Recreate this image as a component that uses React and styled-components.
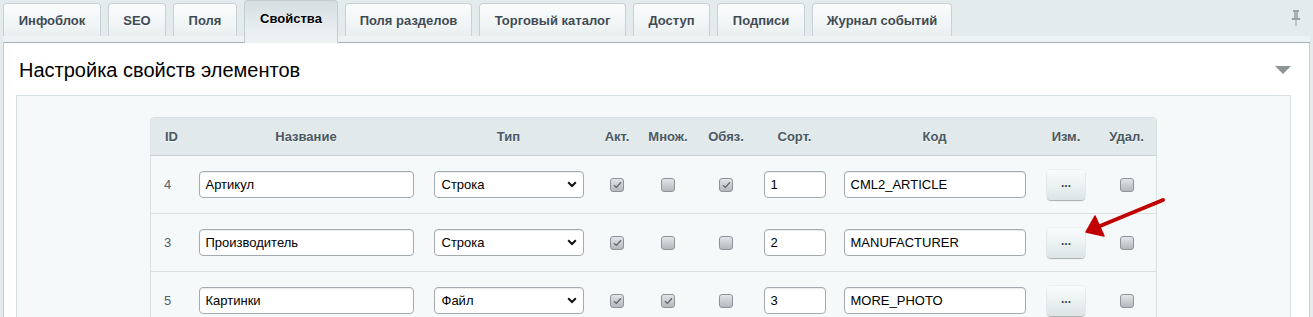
import React from 'react';
import styled, { createGlobalStyle } from 'styled-components';

const GlobalStyle = createGlobalStyle`
  html, body {
    margin: 0;
    padding: 0;
    background: #e4ebed;
    font-family: "Liberation Sans", Arial, sans-serif;
  }
`;

const Page = styled.div`
  position: relative;
  width: 1313px;
  height: 317px;
  overflow: hidden;
  background: #e4ebed;
`;

const TabBar = styled.div`
  display: flex;
  align-items: flex-end;
  gap: 7px;
  height: 36px;
  padding: 0 0 0 3px;
  position: relative;
`;

const Tab = styled.div`
  display: flex;
  align-items: center;
  justify-content: center;
  box-sizing: border-box;
  height: ${(p) => (p.$active ? '43px' : '33px')};
  margin-bottom: ${(p) => (p.$active ? '-7px' : '0')};
  padding: ${(p) => (p.$active ? '0 16px 7px' : '0 16px')};
  width: ${(p) => p.$w}px;
  border: 1px solid ${(p) => (p.$active ? '#c3ccd0' : '#c7d0d4')};
  border-bottom: none;
  border-radius: 4px 4px 0 0;
  background: ${(p) =>
    p.$active
      ? 'linear-gradient(#d6dee1, #e9eef0 70%, #edf2f3)'
      : 'linear-gradient(#fbfcfc, #f1f5f6 60%, #e9eef0)'};
  font-size: 13px;
  font-weight: bold;
  color: ${(p) => (p.$active ? '#000' : '#3f4b54')};
  text-shadow: 0 1px 0 rgba(255, 255, 255, 0.8);
  white-space: nowrap;
  z-index: ${(p) => (p.$active ? 2 : 1)};
`;

const Pin = styled.div`
  position: absolute;
  right: 12px;
  top: 9px;
  width: 10px;
  height: 17px;
`;

const Strip = styled.div`
  height: 6px;
  margin: 0 3px;
  background: #edf2f3;
  border-bottom: 1px solid #a6b0b4;
`;

const Panel = styled.div`
  margin: 0 3px;
  background: #fff;
  border-left: 1px solid #c5ced2;
  border-right: 1px solid #c5ced2;
  padding: 0 17px 0 12px;
  height: 280px;
`;

const TitleRow = styled.div`
  display: flex;
  align-items: center;
  justify-content: space-between;
  height: 52px;
  padding: 0 0 0 3px;
`;

const Title = styled.h2`
  margin: 0;
  font-size: 20px;
  font-weight: normal;
  color: #000;
  padding-top: 2px;
`;

const Toggle = styled.div`
  width: 0;
  height: 0;
  margin-right: 1px;
  border-left: 8px solid transparent;
  border-right: 8px solid transparent;
  border-top: 8px solid #8e9599;
  margin-top: 2px;
`;

const InnerBox = styled.div`
  box-sizing: border-box;
  width: 1275px;
  height: 240px;
  background: #f5f9f9;
  border: 1px solid #d6dfe2;
  padding-top: 21px;
  display: flex;
  justify-content: center;
`;

const COLS = '39px 234px 171px 46px 56px 60px 77px 203px 60px 61px';

const Table = styled.div`
  width: 1007px;
  align-self: flex-start;
  box-sizing: border-box;
  border: 1px solid #d8e0e3;
  border-radius: 4px 4px 0 0;
  background: #f6f9f9;
`;

const HeadRow = styled.div`
  display: grid;
  grid-template-columns: ${COLS};
  height: 37px;
  margin-left: -1px;
  background: #e1e9eb;
  border-bottom: 1px solid #c8d2d6;
  border-radius: 4px 4px 0 0;
`;

const HeadCell = styled.div`
  display: flex;
  align-items: center;
  justify-content: ${(p) => (p.$left ? 'flex-start' : 'center')};
  padding-left: ${(p) => (p.$left ? '15px' : '0')};
  font-size: 13px;
  font-weight: bold;
  color: #4b5962;
  text-shadow: 0 1px 0 rgba(255, 255, 255, 0.7);
`;

const Row = styled.div`
  display: grid;
  grid-template-columns: ${COLS};
  box-sizing: border-box;
  height: 58px;
  margin-left: -1px;
  border-bottom: 1px solid #d8e0e2;
`;

const Cell = styled.div`
  display: flex;
  align-items: center;
  justify-content: ${(p) => (p.$left ? 'flex-start' : 'center')};
  padding-left: ${(p) => (p.$left ? '14px' : '0')};
  font-size: 13px;
  color: #535c69;
`;

const TextInput = styled.div`
  box-sizing: border-box;
  width: ${(p) => p.$w}px;
  height: 27px;
  display: flex;
  align-items: center;
  padding: 0 6px;
  background: #fff;
  border: 1px solid #a4abb0;
  border-radius: 4px;
  box-shadow: inset 0 1px 1px rgba(0, 0, 0, 0.08);
  font-size: 13px;
  color: #000;
`;

const Select = styled(TextInput)`
  justify-content: space-between;
  padding: 0 6px 0 7px;
`;

const Check = styled.div`
  box-sizing: border-box;
  width: 14px;
  height: 14px;
  border: 1px solid #8d9499;
  border-radius: 3px;
  background: linear-gradient(#e3e6e8, #b3b8bb);
  display: flex;
  align-items: center;
  justify-content: center;
`;

const MoreButton = styled.div`
  width: 38px;
  height: 30px;
  box-sizing: border-box;
  border-radius: 4px;
  background: linear-gradient(#fafcfc, #e9eff0 60%, #dce4e7);
  box-shadow: 0 1px 1px rgba(0, 0, 0, 0.28), 0 0 0 1px rgba(0, 0, 0, 0.04);
  display: flex;
  align-items: center;
  justify-content: center;
  font-size: 12px;
  font-weight: bold;
  color: #3a4a56;
  padding-bottom: 3px;
`;

const ArrowLayer = styled.svg`
  position: absolute;
  left: 0;
  top: 0;
  pointer-events: none;
`;

const tabs = [
  ['Инфоблок', 98],
  ['SEO', 58],
  ['Поля', 64],
  ['Свойства', 94, true],
  ['Поля разделов', 127],
  ['Торговый каталог', 147],
  ['Доступ', 77],
  ['Подписи', 88],
  ['Журнал событий', 140],
];

const rows = [
  { id: 4, name: 'Артикул', type: 'Строка', act: true, mult: false, req: true, sort: 1, code: 'CML2_ARTICLE' },
  { id: 3, name: 'Производитель', type: 'Строка', act: true, mult: false, req: false, sort: 2, code: 'MANUFACTURER' },
  { id: 5, name: 'Картинки', type: 'Файл', act: true, mult: true, req: false, sort: 3, code: 'MORE_PHOTO' },
];

const CheckBox = ({ checked }) => (
  <Check>
    {checked && (
      <svg width="9" height="8" viewBox="0 0 9 8">
        <path d="M1 4.2 L3.4 6.4 L8 1.2" fill="none" stroke="#5f676c" strokeWidth="1.3" />
      </svg>
    )}
  </Check>
);

const Chevron = () => (
  <svg width="10" height="7" viewBox="0 0 10 7">
    <path d="M1.2 1.3 L5 5 L8.8 1.3" fill="none" stroke="#111" strokeWidth="2" />
  </svg>
);

export default function App() {
  return (
    <Page>
      <GlobalStyle />
      <TabBar>
        {tabs.map(([label, w, active]) => (
          <Tab key={label} $w={w} $active={active}>
            {label}
          </Tab>
        ))}
        <Pin>
          <svg width="10" height="17" viewBox="0 0 10 17">
            <rect x="2" y="1" width="6" height="2" fill="#9aa2a6" />
            <rect x="3" y="3" width="4" height="6" fill="#a9b0b4" />
            <rect x="1" y="9" width="8" height="2" fill="#9aa2a6" />
            <rect x="4.5" y="11" width="1" height="6" fill="#9aa2a6" />
          </svg>
        </Pin>
      </TabBar>
      <Strip />
      <Panel>
        <TitleRow>
          <Title>Настройка свойств элементов</Title>
          <Toggle />
        </TitleRow>
        <InnerBox>
          <Table>
            <HeadRow>
              <HeadCell $left>ID</HeadCell>
              <HeadCell>Название</HeadCell>
              <HeadCell>Тип</HeadCell>
              <HeadCell>Акт.</HeadCell>
              <HeadCell>Множ.</HeadCell>
              <HeadCell>Обяз.</HeadCell>
              <HeadCell>Сорт.</HeadCell>
              <HeadCell>Код</HeadCell>
              <HeadCell>Изм.</HeadCell>
              <HeadCell>Удал.</HeadCell>
            </HeadRow>
            {rows.map((r) => (
              <Row key={r.id}>
                <Cell $left>{r.id}</Cell>
                <Cell>
                  <TextInput $w={215}>{r.name}</TextInput>
                </Cell>
                <Cell>
                  <Select $w={150}>
                    {r.type}
                    <Chevron />
                  </Select>
                </Cell>
                <Cell>
                  <CheckBox checked={r.act} />
                </Cell>
                <Cell>
                  <CheckBox checked={r.mult} />
                </Cell>
                <Cell>
                  <CheckBox checked={r.req} />
                </Cell>
                <Cell>
                  <TextInput $w={62}>{r.sort}</TextInput>
                </Cell>
                <Cell>
                  <TextInput $w={182}>{r.code}</TextInput>
                </Cell>
                <Cell>
                  <MoreButton>...</MoreButton>
                </Cell>
                <Cell>
                  <CheckBox />
                </Cell>
              </Row>
            ))}
          </Table>
        </InnerBox>
      </Panel>
      <ArrowLayer width="1313" height="317" viewBox="0 0 1313 317">
        <path d="M1163 200 L1100 226" stroke="#c00000" strokeWidth="4" strokeLinecap="round" fill="none" />
        <path d="M1086 232 L1095 216 L1104 236 Z" fill="#c00000" stroke="#c00000" strokeWidth="1.5" strokeLinejoin="round" />
      </ArrowLayer>
    </Page>
  );
}
